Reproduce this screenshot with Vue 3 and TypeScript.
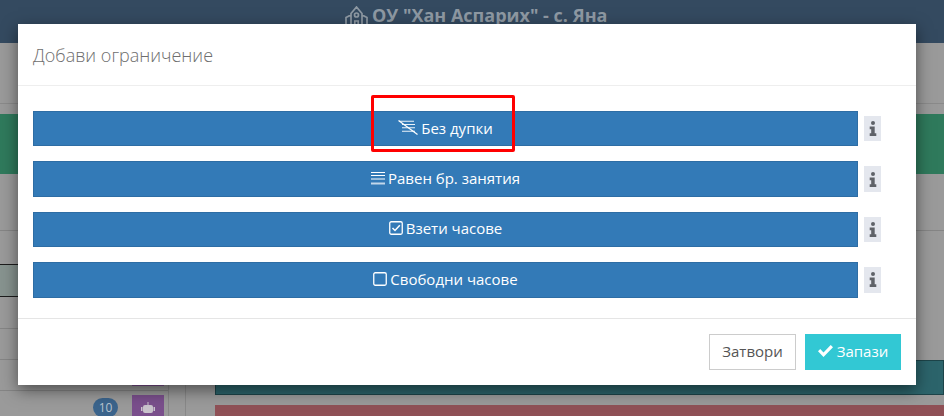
<script setup lang="ts">
const rows = [
  { label: 'Без дупки', icon: 'nogap' },
  { label: 'Равен бр. занятия', icon: 'lines' },
  { label: 'Взети часове', icon: 'checked' },
  { label: 'Свободни часове', icon: 'empty' },
]
</script>

<template>
  <div class="page">
    <header class="topbar">
      <svg class="school" width="23" height="24" viewBox="0 0 23 24" fill="none" stroke="currentColor" stroke-width="1.700">
        <path d="M1 11.500 6 9v15H1zM22 11.500 17 9v15h5zM6 7.500 11.500 1 17 7.500V24H6z" />
        <circle cx="11.500" cy="9" r="2" />
        <path d="M9.800 24v-9h3.400v9" />
      </svg>
      <span>ОУ "Хан Аспарих" - с. Яна</span>
    </header>
    <div class="back">
      <div class="back-strip"></div>
      <div class="back-green"></div>
      <div class="back-mid"></div>
      <div class="back-grid">
        <div class="col-left">
          <div class="cell cell-a"></div>
          <div class="cell cell-b"></div>
          <div class="cell cell-c"></div>
          <div class="cell cell-c"></div>
          <div class="cell cell-d"><span class="robot robot-top"></span></div>
          <div class="cell-last">
            <span class="count">10</span>
            <span class="robot">
              <svg width="14" height="12" viewBox="0 0 14 12" fill="#c9c3cc"><rect x="2" y="3" width="10" height="8" rx="2" /><rect x="0" y="5" width="1.500" height="4" /><rect x="12.500" y="5" width="1.500" height="4" /><rect x="6.500" y="0" width="1" height="3" /></svg>
            </span>
          </div>
        </div>
        <div class="col-gutter"></div>
        <div class="col-right">
          <div class="teal"></div>
          <div class="red"></div>
        </div>
      </div>
    </div>

    <section class="modal">
      <div class="modal-head">Добави ограничение</div>
      <div class="modal-body">
        <div v-for="row in rows" :key="row.label" class="row">
          <button class="main-btn" type="button">
            <svg v-if="row.icon === 'nogap'" class="ico" width="20" height="15" viewBox="0 0 20 15" fill="none" stroke="#fff" stroke-width="1.100">
              <path d="M1 1.200h15M4 4.500h13M4 7.800h13M4 11.200h13" opacity=".9" />
              <path d="M.5 .5 19.500 14.500" stroke-width="1.200" />
            </svg>
            <svg v-else-if="row.icon === 'lines'" class="ico" width="14" height="13" viewBox="0 0 14 13" fill="none" stroke="#fff">
              <path d="M0 .5h14M0 3.500h14M0 7h14" />
              <path d="M0 11.500h14" stroke-width="2" opacity=".7" />
            </svg>
            <svg v-else-if="row.icon === 'checked'" class="ico" width="14" height="14" viewBox="0 0 14 14" fill="none" stroke="#fff">
              <rect x=".75" y=".75" width="12.500" height="12.500" rx="1.500" stroke-width="1.300" />
              <path d="M3.500 7 6 9.500 10.800 4.200" stroke-width="1.500" />
            </svg>
            <svg v-else class="ico" width="14" height="14" viewBox="0 0 14 14" fill="none" stroke="#fff">
              <rect x=".75" y=".75" width="12.500" height="12.500" rx="1.500" stroke-width="1.300" />
            </svg>
            <span>{{ row.label }}</span>
          </button>
          <span class="info">
            <svg width="8" height="15" viewBox="0 0 8 15" fill="#5f6268">
              <circle cx="4" cy="2" r="2" />
              <path d="M.7 5.500h5v6.800H7.300V15H.7v-2.700h1.500V8.200H.7z" />
            </svg>
          </span>
        </div>
      </div>
      <div class="modal-foot">
        <button class="close-btn" type="button">Затвори</button>
        <button class="save-btn" type="button">
          <svg width="15" height="12" viewBox="0 0 15 12" fill="#fff"><path d="M0 6.300 2.200 4.100 5.500 7.400 12.700 0 15 2.200 5.500 12z" /></svg>
          <span>Запази</span>
        </button>
      </div>
      <div class="marker"></div>
    </section>
  </div>
</template>

<style>
html, body { margin: 0; background: #999; }
</style>

<style scoped>
.page {
  position: relative;
  width: 944px;
  height: 416px;
  overflow: hidden;
  background: #9a9a9a;
  font-family: "Open Sans", "DejaVu Sans", sans-serif;
}
.topbar {
  height: 43px;
  box-sizing: border-box;
  padding: 3px 0 0 345px;
  display: flex;
  align-items: flex-start;
  gap: 4px;
  background: #344a60;
  color: #8e99a3;
  font-size: 18px;
  font-weight: 700;
  line-height: 24px;
}
.school { flex: none; margin-top: 3px; }
.back { height: 373px; display: flex; flex-direction: column; }
.back-strip { flex: none; height: 60px; border-bottom: 1px solid #8a8a8a; margin-bottom: 10px; }
.back-green { flex: none; height: 60px; background: #2f7a5c; }
.back-mid { flex: none; height: 56px; border-bottom: 1px solid #858585; }
.back-grid { flex: 1; display: flex; min-height: 0; }
.col-left { flex: none; width: 168px; border-right: 1px solid #888; }
.col-gutter { flex: none; width: 16px; border-right: 1px solid #888; }
.col-right { flex: 1; padding: 129px 0 0 29px; }
.cell { box-sizing: border-box; border-bottom: 1px solid #858585; }
.cell-a { height: 34px; border-bottom-color: #1c1c1c; }
.cell-b { height: 32px; background: #87938f; border-bottom-color: #1c1c1c; }
.cell-c { height: 31.500px; }
.cell-d { height: 31px; padding-left: 132px; }
.robot-top { display: block; height: 26px; }
.cell-last {
  height: 25px;
  padding: 4px 0 0 93px;
  display: flex;
  align-items: flex-start;
  gap: 14px;
}
.cell-last .count { margin-top: 3px; }
.count {
  flex: none;
  width: 25px;
  height: 19px;
  border-radius: 10px;
  background: #3b648c;
  color: #b9c4d0;
  font-size: 12px;
  line-height: 19px;
  text-align: center;
}
.robot {
  flex: none;
  width: 32px;
  height: 26px;
  background: #7a4f8c;
  display: flex;
  align-items: center;
  justify-content: center;
}
.teal {
  height: 35px;
  box-sizing: border-box;
  border: 1px solid #1d4449;
  background: #2c646b;
}
.red { height: 20px; margin-top: 10px; background: #8f5056; }
.modal {
  position: absolute;
  left: 18px;
  top: 24px;
  width: 898px;
  height: 361px;
  background: #fff;
  box-shadow: 0 5px 15px rgba(0, 0, 0, .5);
  display: flex;
  flex-direction: column;
}
.modal-head {
  height: 61px;
  border-bottom: 1px solid #eee;
  padding-left: 15px;
  color: #6e6e6e;
  font-size: 18px;
  font-weight: 300;
  line-height: 62px;
}
.modal-body {
  height: 232px;
  box-sizing: border-box;
  padding: 25px 35px 0 15px;
  display: flex;
  flex-direction: column;
  gap: 15px;
}
.row { height: 35.400px; display: flex; gap: 6px; }
.main-btn {
  width: 825px;
  height: 100%;
  padding: 0 0 2px;
  border: 1px solid #2e6da4;
  background: #337ab7;
  color: #fff;
  font: 500 15px "Open Sans", sans-serif;
  display: flex;
  align-items: center;
  justify-content: center;
  gap: 3px;
}
.ico { flex: none; }
.info {
  width: 17px;
  height: 25.400px;
  margin-top: 5px;
  background: #e4e7ee;
  display: flex;
  align-items: center;
  justify-content: center;
}
.modal-foot {
  flex: 1;
  border-top: 1px solid #e5e5e5;
  padding: 15px 15px 0 0;
  display: flex;
  justify-content: flex-end;
  align-items: flex-start;
  gap: 9px;
}
.close-btn, .save-btn {
  height: 36px;
  padding: 0 0 2px;
  font: 15px "Open Sans", sans-serif;
  display: flex;
  align-items: center;
  justify-content: center;
}
.close-btn {
  width: 87px;
  background: #fff;
  border: 1px solid #ccc;
  color: #555;
}
.save-btn {
  width: 96px;
  gap: 4px;
  background: #32c8d4;
  border: 0;
  color: #fff;
}
.marker {
  position: absolute;
  left: 353px;
  top: 71px;
  width: 138px;
  height: 51px;
  border: 3px solid #f00;
  border-radius: 2px;
}
</style>
